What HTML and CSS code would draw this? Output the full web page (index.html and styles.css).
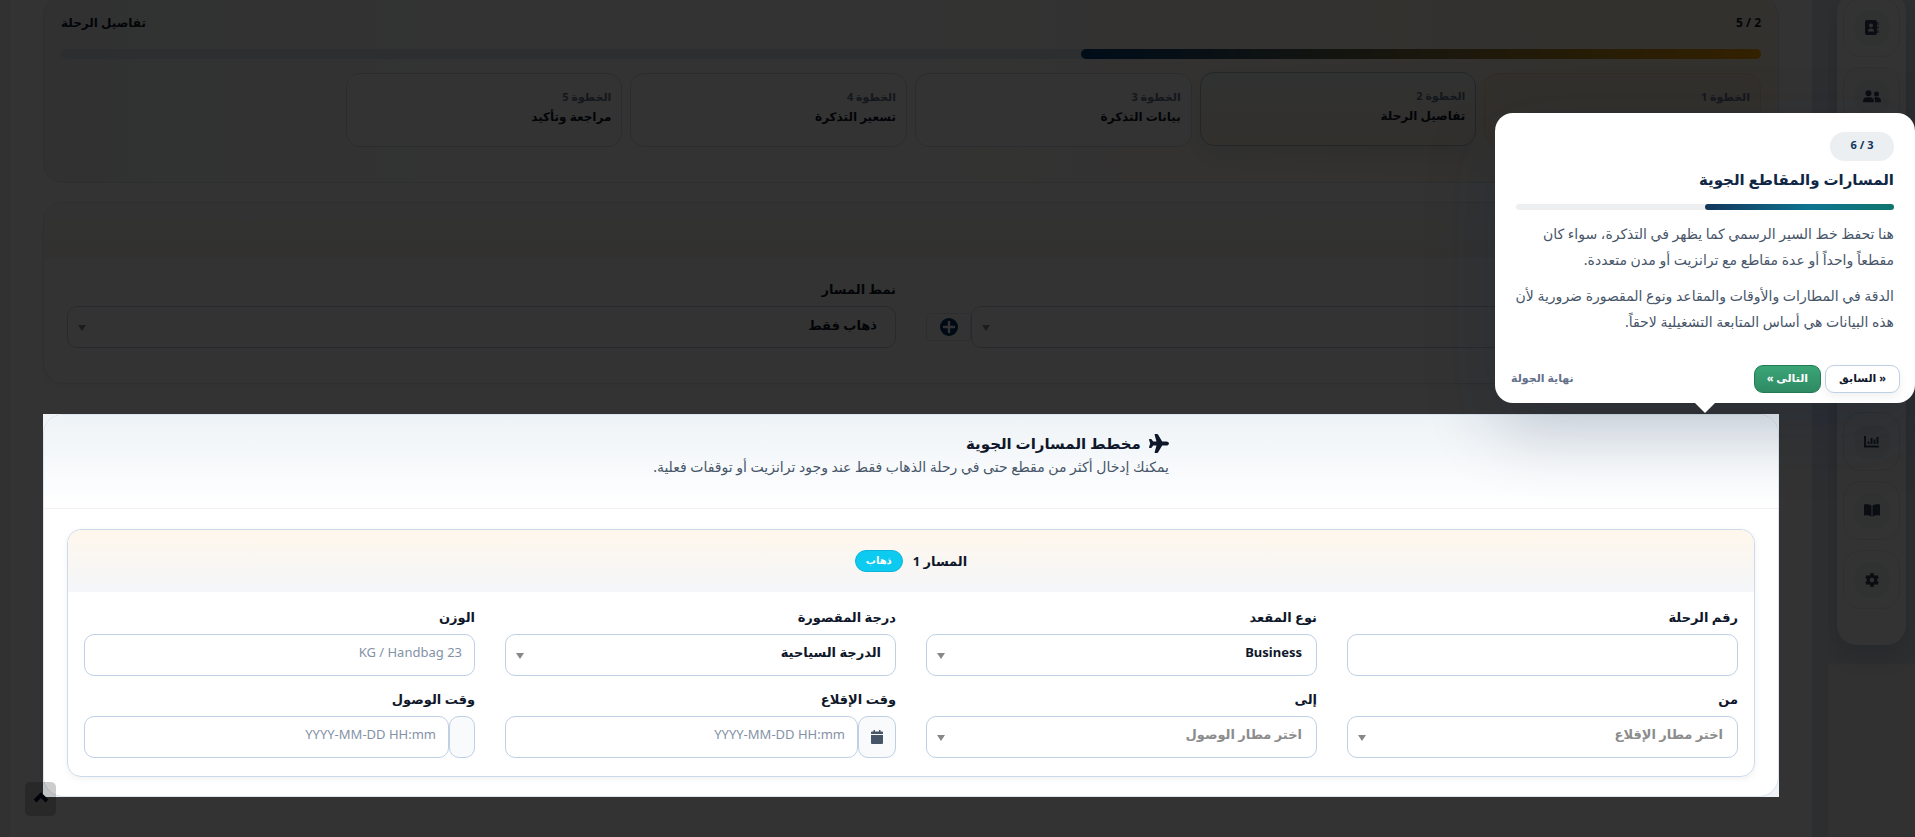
FILE: index.html
```html
<!DOCTYPE html>
<html lang="ar" dir="rtl">
<head>
<meta charset="UTF-8" />
<meta name="viewport" content="width=device-width, initial-scale=1" />
<title>تفاصيل الرحلة</title>
<link rel="stylesheet" href="styles.css">
</head>
<body>
  <aside class="rail">
    <nav class="sidebar" aria-label="القائمة">
      <a href="#contacts" class="side-link" aria-label="جهات الاتصال"><span class="side-icon">
        <svg width="14" height="15" viewBox="0 0 14 15"><path fill="currentColor" fill-rule="evenodd" d="M2 0h8a2 2 0 0 1 2 2v11a2 2 0 0 1-2 2H2a2 2 0 0 1-2-2V2a2 2 0 0 1 2-2zM6 3.500a2 2 0 1 0 0 4 2 2 0 0 0 0-4zM3 11.500h6c0-2-1.200-3-3-3s-3 1-3 3zM12.500 2h1v3h-1zM12.500 6h1v3h-1zM12.500 10h1v3h-1z"/></svg>
      </span></a>
      <a href="#customers" class="side-link" aria-label="العملاء"><span class="side-icon">
        <svg width="18" height="13" viewBox="0 0 18 13"><g fill="currentColor"><circle cx="5.500" cy="3.200" r="3"/><circle cx="13.500" cy="4" r="2.500"/><path d="M0 11.500C0 8.500 2 7.200 4 7.200h3c2 0 4 1.300 4 4.300 0 .4-.3.700-.7.700H.7a.7.7 0 0 1-.7-.7zM12 12.200c.3-2-.2-3.700-1.300-4.700.4-.2.900-.3 1.300-.3h2.500c2 0 3.500 1.500 3.500 4 0 .6-.4 1-1 1z"/></g></svg>
      </span></a>
      <a href="#tickets" class="side-link" aria-label="التذاكر"><span class="side-icon"></span></a>
      <a href="#hotels" class="side-link" aria-label="الفنادق"><span class="side-icon"></span></a>
      <a href="#visas" class="side-link" aria-label="التأشيرات"><span class="side-icon"></span></a>
      <a href="#accounts" class="side-link" aria-label="الحسابات"><span class="side-icon"></span></a>
      <a href="#reports" class="side-link" aria-label="التقارير"><span class="side-icon">
        <svg width="15" height="12" viewBox="0 0 15 12"><path fill="none" stroke="currentColor" stroke-width="2" d="M1 0v10.500h14"/><path fill="none" stroke="currentColor" stroke-width="2" d="M4.500 8V5.500M7.500 8V2M10.500 8V3.500M13.500 8V1"/></svg>
      </span></a>
      <a href="#guide" class="side-link" aria-label="الدليل"><span class="side-icon">
        <svg width="16" height="13" viewBox="0 0 16 13"><path fill="currentColor" d="M7.500 1.500C5.500.3 3 0 .6.300 .2.400 0 .7 0 1v9.700c0 .4.300.7.700.7 2.300-.2 4.700.1 6.800 1.400zM8.500 1.500c2-1.200 4.500-1.500 6.900-1.200.4.100.6.400.6.700v9.700c0 .4-.3.700-.7.700-2.300-.2-4.700.1-6.800 1.400z"/></svg>
      </span></a>
      <a href="#settings" class="side-link" aria-label="الإعدادات"><span class="side-icon">
        <svg width="14" height="14" viewBox="0 0 14 14"><path fill="currentColor" fill-rule="evenodd" d="M5.500 0h3l.5 2 1.200.7 2-.6 1.500 2.600-1.500 1.500v1.600l1.500 1.500-1.500 2.600-2-.6-1.200.7-.5 2h-3L5 12l-1.200-.7-2 .6L.3 9.300l1.500-1.500V6.200L.3 4.700l1.500-2.600 2 .6L5 2zM7 4.800a2.200 2.200 0 1 0 0 4.400 2.200 2.200 0 0 0 0-4.400z"/></svg>
      </span></a>
    </nav>
  </aside>

  <main class="main">
    <section class="card progress-card">
      <div class="progress-head">
        <span>2 / 5</span>
        <span>تفاصيل الرحلة</span>
      </div>
      <div class="track"><div class="track-fill" style="width:40%"></div></div>
      <ol class="steps">
        <li class="step done"><small>الخطوة 1</small></li>
        <li class="step active"><small>الخطوة 2</small><b>تفاصيل الرحلة</b></li>
        <li class="step"><small>الخطوة 3</small><b>بيانات التذكرة</b></li>
        <li class="step"><small>الخطوة 4</small><b>تسعير التذكرة</b></li>
        <li class="step"><small>الخطوة 5</small><b>مراجعة وتأكيد</b></li>
      </ol>
    </section>

    <section class="card type-card">
      <div class="type-head"></div>
      <div class="type-body">
        <div class="with-button">
          <div class="select-wrap">
            <select aria-label="العميل"><option></option></select>
          </div>
          <button type="button" class="add-btn" aria-label="إضافة">
            <svg width="18" height="18" viewBox="0 0 18 18"><circle cx="9" cy="9" r="9" fill="#003366"/><path d="M9 4v10M4 9h10" stroke="#fff" stroke-width="2.500" stroke-linecap="round"/></svg>
          </button>
        </div>
        <div class="field">
          <label for="tripType">نمط المسار</label>
          <div class="select-wrap">
            <select id="tripType" class="roomy"><option>ذهاب فقط</option></select>
          </div>
        </div>
      </div>
    </section>

    <div class="spotlight">
      <section class="card routes-card">
        <header class="routes-head">
          <div class="routes-title">
            <h2>
              <svg width="20" height="19" viewBox="0 0 20 19"><path fill="currentColor" d="M17.300 7.400H13.200L9 .500A1 1 0 0 0 8.200 0H6.200c-.4 0-.7.400-.6.800L7.500 7.400H4.200L2.500 5.200a.6.600 0 0 0-.5-.2H.6c-.4 0-.7.400-.6.800L1.200 9.500 0 13.200c-.1.400.2.800.6.800H2c.2 0 .4-.1.500-.2l1.700-2.200h3.300l-1.900 6.600c-.1.400.2.800.6.800h2c.3 0 .6-.2.800-.5l4.200-6.900h4.100c1.200 0 2.700-.9 2.700-2.100s-1.500-2.100-2.700-2.100z"/></svg>
              مخطط المسارات الجوية
            </h2>
            <p>يمكنك إدخال أكثر من مقطع حتى في رحلة الذهاب فقط عند وجود ترانزيت أو توقفات فعلية.</p>
          </div>
        </header>

        <div class="segment">
          <div class="segment-head">
            <h3>المسار 1</h3>
            <span class="badge">ذهاب</span>
          </div>
          <div class="segment-body">
            <div class="field">
              <label for="flightNo">رقم الرحلة</label>
              <input type="text" id="flightNo" />
            </div>
            <div class="field">
              <label for="seatType">نوع المقعد</label>
              <div class="select-wrap"><select id="seatType"><option>Business</option></select></div>
            </div>
            <div class="field">
              <label for="cabin">درجة المقصورة</label>
              <div class="select-wrap"><select id="cabin"><option>الدرجة السياحية</option></select></div>
            </div>
            <div class="field">
              <label for="weight">الوزن</label>
              <input type="text" id="weight" placeholder="23 KG / Handbag" />
            </div>
            <div class="field">
              <label for="from">من</label>
              <div class="select-wrap"><select id="from" class="empty"><option>اختر مطار الإقلاع</option></select></div>
            </div>
            <div class="field">
              <label for="to">إلى</label>
              <div class="select-wrap"><select id="to" class="empty"><option>اختر مطار الوصول</option></select></div>
            </div>
            <div class="field">
              <label for="departAt">وقت الإقلاع</label>
              <div class="group">
                <span class="addon">
                  <svg width="12" height="14" viewBox="0 0 12 14"><path fill="currentColor" d="M2.500 0h1.500v1.500h4V0h1.500v1.500H11a1 1 0 0 1 1 1V4H0V2.500a1 1 0 0 1 1-1h1.500zM0 5h12v8a1 1 0 0 1-1 1H1a1 1 0 0 1-1-1z"/></svg>
                </span>
                <input type="text" id="departAt" placeholder="YYYY-MM-DD HH:mm" />
              </div>
            </div>
            <div class="field">
              <label for="arriveAt">وقت الوصول</label>
              <div class="group">
                <span class="addon"></span>
                <input type="text" id="arriveAt" placeholder="YYYY-MM-DD HH:mm" />
              </div>
            </div>
          </div>
        </div>
      </section>

      <div class="tour" role="dialog" aria-labelledby="tourTitle">
        <div class="tour-body">
          <span class="tour-count">3 / 6</span>
          <h4 id="tourTitle">المسارات والمقاطع الجوية</h4>
          <div class="tour-track"><div class="tour-fill" style="width:50%"></div></div>
          <p>هنا تحفظ خط السير الرسمي كما يظهر في التذكرة، سواء كان<br />مقطعاً واحداً أو عدة مقاطع مع ترانزيت أو مدن متعددة.</p>
          <p>الدقة في المطارات والأوقات والمقاعد ونوع المقصورة ضرورية لأن<br />هذه البيانات هي أساس المتابعة التشغيلية لاحقاً.</p>
        </div>
        <div class="tour-nav">
          <button type="button" class="prev">« السابق</button>
          <button type="button" class="next">التالى »</button>
          <button type="button" class="end">نهاية الجولة</button>
        </div>
      </div>
    </div>
  </main>

  <button type="button" class="to-top" aria-label="إلى الأعلى">
    <svg width="16" height="11" viewBox="0 0 16 11"><path d="M2 9l6-6 6 6" fill="none" stroke="#000309" stroke-width="4"/></svg>
  </button>
</body>
</html>
```
FILE: styles.css
```css
* {
  box-sizing: border-box;
}
body {
  margin: 0;
  min-height: 100vh;
  overflow: hidden;
  display: flex;
  align-items: flex-start;
  background: #f5f5f5;
  color: #0f172a;
  font-family: "Noto Sans", "DejaVu Sans", sans-serif;
  font-size: 13px;
}
input, select, button {
  font-family: inherit;
  font-size: 13px;
  color: inherit;
}
h2, h3, h4, p {
  margin: 0;
}

/* side menu */
.rail {
  flex: none;
  width: 87px;
  padding: 0 9px 19px;
  background: #e4e8ee;
}
.sidebar {
  display: flex;
  flex-direction: column;
  gap: 10px;
  margin-top: -8px;
  padding: 6px 6px 36px;
  background: #fcfcfc;
  border-radius: 20px;
  box-shadow: 0 12px 30px rgba(0, 51, 102, 0.2);
}
.side-link {
  display: flex;
  align-items: center;
  justify-content: center;
  height: 59px;
  border: 1px solid #e6ebf2;
  border-radius: 18px;
  color: #334155;
}
.side-icon {
  display: flex;
  align-items: center;
  justify-content: center;
  width: 34px;
  height: 34px;
  border-radius: 12px;
  background: #eff2f5;
}

/* page */
.main {
  flex: 1;
  min-width: 0;
  min-height: 100vh;
  margin-left: 9px;
  padding: 0 33px 40px;
  background: #fff;
  border-left: 1px solid #e8ebf0;
  border-right: 16px solid #dfe6ee;
}
.card {
  background: #fff;
  border: 1px solid #dbe3ec;
  border-radius: 20px;
}
.progress-card {
  height: 187px;
  margin-top: -4px;
  padding: 16px 17px;
  background: radial-gradient(circle at top right, rgba(255, 165, 0, 0.12), transparent 50%), linear-gradient(to right, #f2f5fa, #fdfdfd 25%);
}
.progress-head {
  display: flex;
  justify-content: space-between;
  line-height: 20px;
  font-size: 12px;
  font-weight: bold;
}
.track {
  height: 10px;
  margin: 16px 0 14px;
  border-radius: 5px;
  background: #dce3ec;
}
.track-fill {
  height: 10px;
  border-radius: 5px;
  background: linear-gradient(to left, #ffa500, #004080);
}
.steps {
  display: grid;
  grid-template-columns: repeat(6, 1fr);
  gap: 8px;
  margin: 0;
  padding: 0;
  list-style: none;
}
.step {
  display: flex;
  flex-direction: column;
  height: 74px;
  padding: 13px 10px;
  background: #fff;
  border: 1px solid #d5dde8;
  border-radius: 14px;
  line-height: 20px;
}
.step small {
  color: #64748b;
  font-size: 11px;
  font-weight: bold;
}
.step b {
  font-size: 12px;
}
.step.done {
  background: #fbefd9;
  border-color: #f6dfb4;
}
.step.active {
  background: linear-gradient(#f0f3f5, #fbf0e0);
  border-color: #a9bccd;
  box-shadow: 0 10px 24px rgba(0, 51, 102, 0.1);
  transform: translateY(-1px);
}

.type-card {
  height: 182px;
  margin-top: 19px;
  overflow: hidden;
  box-shadow: 0 4px 12px rgba(15, 23, 42, 0.04);
}
.type-head {
  height: 55px;
  background: linear-gradient(#f7f8fa, #fbf6ef);
}
.type-body {
  display: grid;
  grid-template-columns: 1fr 1fr;
  align-items: end;
  gap: 30px;
  padding: 20px 23px;
}
.with-button {
  display: flex;
  align-items: center;
}
.with-button .select-wrap {
  flex: 1;
}
.add-btn {
  display: flex;
  align-items: center;
  justify-content: center;
  width: 45px;
  height: 28px;
  padding: 0;
  background: #fff;
  border: 1px solid #dce6f2;
  border-radius: 4px;
}

/* form fields */
.field label {
  display: block;
  height: 28px;
  line-height: 22px;
  font-weight: bold;
}
input, select {
  display: block;
  width: 100%;
  height: 42px;
  padding: 0 14px 6px;
  background: #fff;
  border: 1px solid #bfd0e4;
  border-radius: 10px;
}
select {
  appearance: none;
  font-weight: bold;
}
select.roomy {
  padding: 0 18px 4px;
}
select.empty {
  color: #8c8c8c;
}
input {
  padding: 0 12px 6px;
}
input::placeholder {
  color: #8492a6;
  opacity: 1;
}
.select-wrap {
  position: relative;
}
.select-wrap::after {
  content: "";
  position: absolute;
  left: 11px;
  top: 19px;
  border: 4px solid transparent;
  border-top: 6px solid #888;
  border-bottom: 0;
  pointer-events: none;
}
.group {
  display: flex;
}
.addon {
  display: flex;
  align-items: center;
  flex: none;
  padding: 0 12px;
  background: #f8fafc;
  border: 1px solid #bfd0e4;
  border-radius: 10px;
  color: #475569;
}

/* everything outside the highlighted block is dimmed */
.spotlight {
  position: relative;
  z-index: 10;
  margin-top: 30px;
  background: #f1f4f7;
  box-shadow: 0 0 0 9999px rgba(0, 0, 0, 0.8);
}
.routes-card {
  padding-bottom: 19px;
}
.routes-head {
  display: flex;
  justify-content: center;
  height: 94px;
  padding-top: 14px;
  background: linear-gradient(#eef3f7, #fff);
  border-bottom: 1px solid #eef0f3;
  border-radius: 20px 20px 0 0;
}
.routes-title h2 {
  display: flex;
  align-items: center;
  gap: 8px;
  font-size: 15px;
  line-height: 28px;
}
.routes-title p {
  color: #475569;
  font-size: 14px;
  line-height: 20px;
}
.segment {
  margin: 20px 23px 0;
  border: 1px solid #cbdbea;
  border-radius: 14px;
  box-shadow: 0 2px 6px rgba(15, 23, 42, 0.06);
}
.segment-head {
  display: flex;
  align-items: center;
  justify-content: center;
  gap: 10px;
  height: 62px;
  background: linear-gradient(#fff7ec, #f4f6f9);
  border-radius: 14px 14px 0 0;
}
.segment-head h3 {
  font-size: 13px;
  line-height: 24px;
}
.badge {
  padding: 0 10px 2px;
  background: #0dcaf0;
  border: 1px solid #0bb4da;
  border-radius: 11px;
  color: #fff;
  font-size: 10px;
  font-weight: bold;
  line-height: 18px;
}
.segment-body {
  display: grid;
  grid-template-columns: repeat(4, 1fr);
  gap: 12px 30px;
  padding: 14px 16px 18px;
}

/* tour popup */
.tour {
  position: absolute;
  right: -136px;
  bottom: calc(100% + 11px);
  width: 420px;
  padding: 19px 15px 10px;
  background: #fff;
  border-radius: 18px;
  box-shadow: 0 24px 70px rgba(15, 30, 65, 0.22);
}
.tour::after {
  content: "";
  position: absolute;
  top: 100%;
  left: 50%;
  margin-left: -10px;
  border: 10px solid transparent;
  border-top-color: #fff;
  border-bottom: 0;
}
.tour-body {
  padding: 0 6px;
}
.tour-count {
  display: block;
  width: 64px;
  height: 29px;
  border-radius: 15px;
  background: #ebeff2;
  color: #12355b;
  font-size: 11px;
  font-weight: bold;
  line-height: 25px;
  text-align: center;
}
.tour h4 {
  margin-top: 4px;
  color: #0f2744;
  font-size: 15px;
  line-height: 28px;
}
.tour-track {
  height: 6px;
  margin: 11px 0;
  border-radius: 3px;
  background: #edeef0;
}
.tour-fill {
  height: 6px;
  border-radius: 3px;
  background: linear-gradient(to left, #0f766e, #0e7490 45%, #12355b);
}
.tour p {
  margin-bottom: 10px;
  color: #475569;
  font-size: 14px;
  line-height: 26px;
  white-space: nowrap;
}
.tour-nav {
  display: flex;
  align-items: center;
  gap: 4px;
  margin-top: 30px;
}
.tour-nav button {
  height: 28px;
  padding: 0 12px 4px;
  border-radius: 9px;
  font-size: 11px;
  font-weight: bold;
  cursor: pointer;
}
.tour-nav .prev {
  padding: 0 13px 4px;
  background: #fff;
  border: 1px solid #bfd0e4;
  box-shadow: 0 4px 10px rgba(15, 23, 42, 0.06);
}
.next {
  background: linear-gradient(#3ba577, #2f8a63);
  border: 1px solid #217a52;
  color: #fff;
}
.tour-nav .end {
  margin-right: auto;
  padding: 0 1px 4px;
  background: none;
  border: 0;
  color: #64708a;
}

.to-top {
  position: fixed;
  left: 25px;
  bottom: 21px;
  z-index: 20;
  display: flex;
  align-items: center;
  justify-content: center;
  width: 31px;
  height: 34px;
  padding: 0 0 4px;
  background: rgba(0, 0, 0, 0.2);
  border: 0;
  border-radius: 5px;
}
```
